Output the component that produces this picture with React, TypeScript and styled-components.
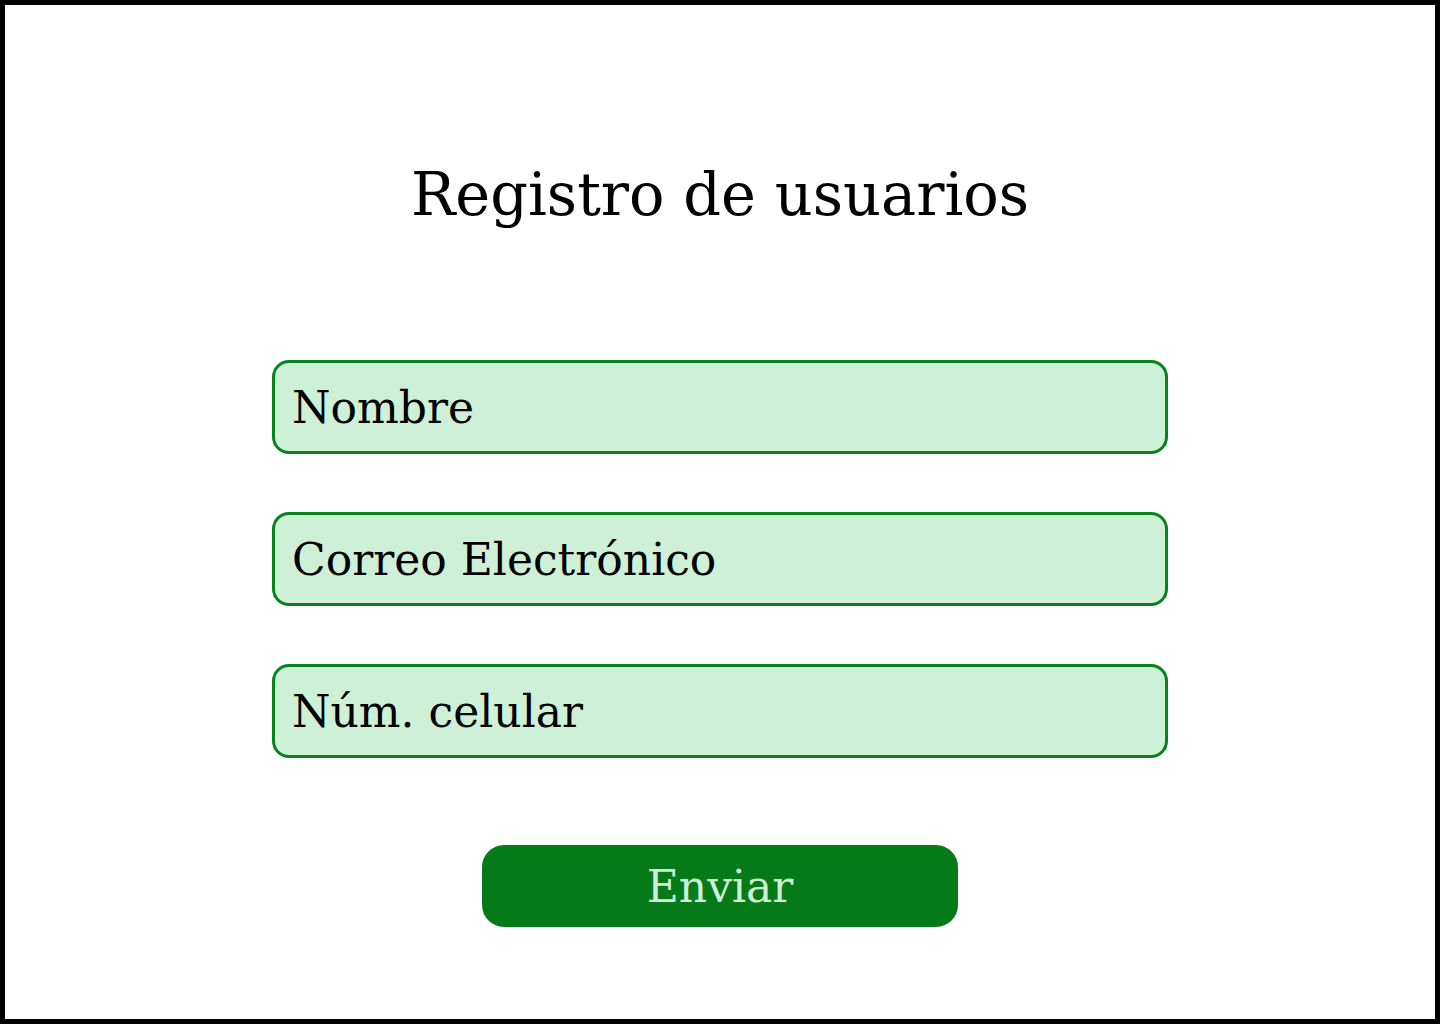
import React from "react";
import styled, { createGlobalStyle } from "styled-components";

const Global = createGlobalStyle`
  html, body { margin: 0; padding: 0; }
  body { background: #ffffff; font-family: "DejaVu Serif", serif; }
  * { box-sizing: border-box; }
`;

const Frame = styled.div`
  width: 1440px;
  height: 1024px;
  border: 5px solid #000;
  background: #fff;
  display: flex;
  flex-direction: column;
  align-items: center;
`;

const Title = styled.h1`
  margin: 150px 0 0;
  font-family: "DejaVu Serif", serif;
  font-weight: 400;
  font-size: 59px;
  line-height: 80px;
  color: #000;
`;

const Form = styled.form`
  margin-top: 125px;
  display: flex;
  flex-direction: column;
  align-items: center;
  gap: 58px;
`;

const Field = styled.input`
  width: 896px;
  height: 94px;
  border: 3px solid #0a821c;
  border-radius: 17px;
  background: #cef0d7;
  padding: 0 17px;
  font-family: "DejaVu Serif", serif;
  font-size: 44px;
  color: #000;
  outline: none;
  &::placeholder { color: #000; opacity: 1; }
`;

const Button = styled.button`
  margin-top: 29px;
  width: 476px;
  height: 82px;
  border: none;
  border-radius: 22px;
  background: #067a18;
  color: #cdf0d6;
  font-family: "DejaVu Serif", serif;
  font-size: 44px;
  cursor: pointer;
`;

export default function App() {
  return (
    <>
      <Global />
      <Frame>
        <Title>Registro de usuarios</Title>
        <Form onSubmit={(e) => e.preventDefault()}>
          <Field placeholder="Nombre" />
          <Field placeholder="Correo Electrónico" />
          <Field placeholder="Núm. celular" />
          <Button type="submit">Enviar</Button>
        </Form>
      </Frame>
    </>
  );
}
